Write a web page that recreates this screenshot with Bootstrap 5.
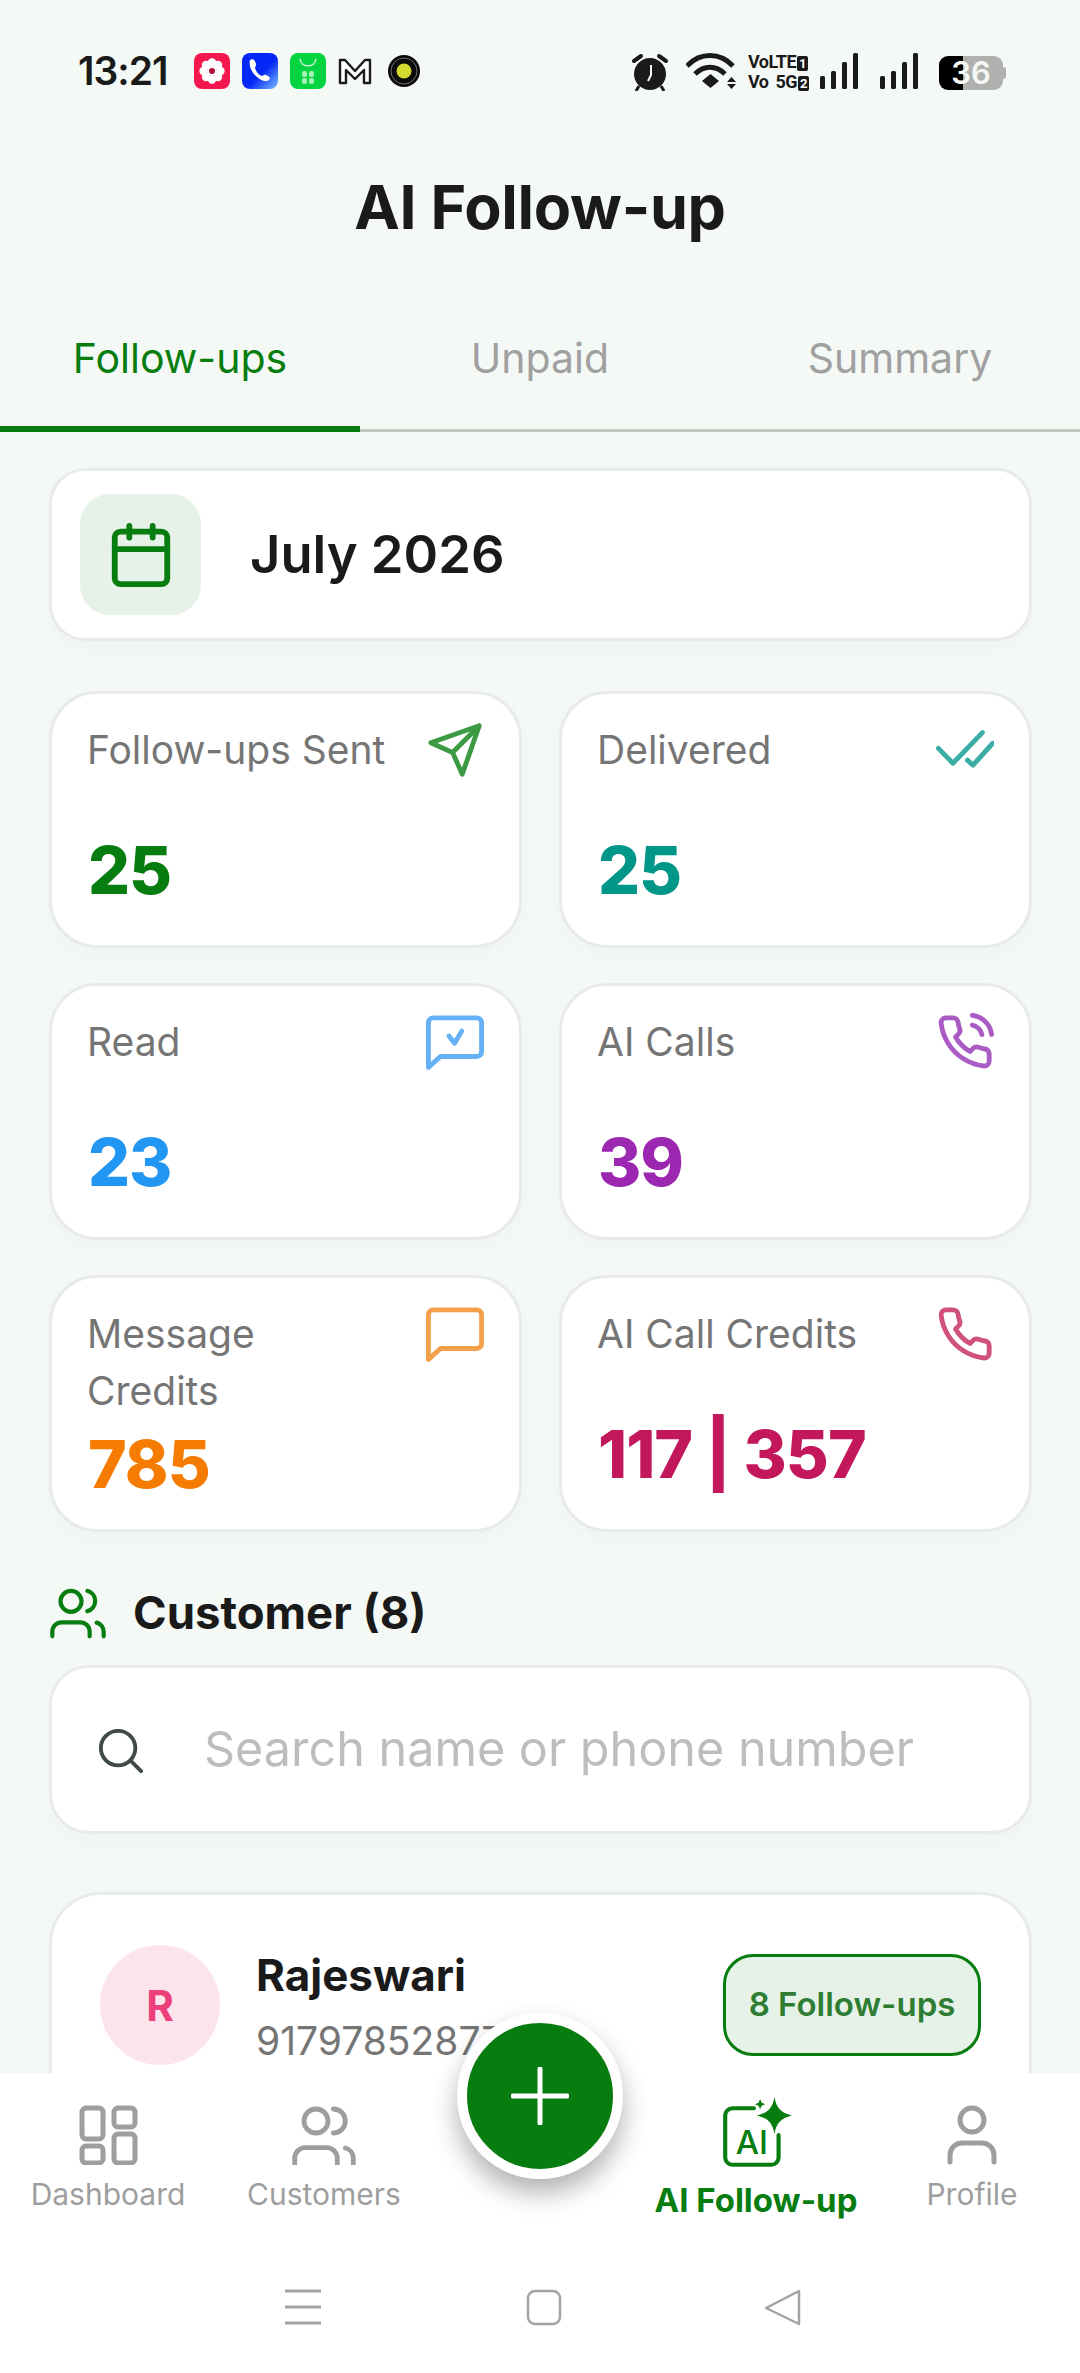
<!DOCTYPE html>
<html lang="en">
<head>
    <meta charset="UTF-8">
    <meta name="viewport" content="width=device-width, initial-scale=1.0">
    <title>AI Follow-up</title>
    <link href="https://cdn.jsdelivr.net/npm/bootstrap@5.3.3/dist/css/bootstrap.min.css" rel="stylesheet">
    <style>
        body { background: #f5f9f6; font-family: Inter, "Noto Sans", sans-serif; color: #1a1a1a; }
        .screen { width: 1080px; height: 2373px; overflow: hidden; position: relative; }
        .content-area { height: 2073px; overflow: hidden; }
        .status-bar { height: 94px; padding: 53px 77px 0 78px; }
        .clock { font-size: 39px; font-weight: 600; line-height: 36px; letter-spacing: -1px; margin-right: 26px; }
        .tiny-net { font-family: Roboto, sans-serif; font-size: 18px; font-weight: 700; line-height: 18px; width: 58px; letter-spacing: -.5px; word-spacing: 3px; white-space: nowrap; }
        .sim-no { background: #1a1a1a; color: #fff; font-size: 13px; padding: 0 2px; border-radius: 2px; margin-left: 1px; }
        .battery-box { width: 64px; height: 34px; border-radius: 9px; background: linear-gradient(90deg, #000 37%, #b0b1ae 37%); color: #f5f9f6; font-size: 31px; font-weight: 600; line-height: 34px; text-align: center; margin-top: 3px; position: relative; }
        .battery-box::after { content: ""; position: absolute; right: -3px; top: 11px; width: 3px; height: 12px; background: #b0b1ae; border-radius: 0 3px 3px 0; }
        .page-title { font-size: 61px; font-weight: 700; line-height: 68px; margin: 0; padding-top: 79px; text-align: center; letter-spacing: -.3px; box-sizing: content-box; }
        .tab-row { border-bottom: 3px solid #c2c9bf; height: 109px; margin-top: 82px; }
        .tab-item { width: 360px; font-size: 41px; line-height: 56px; padding-top: 7px; text-align: center; color: #a0a0a0; height: 109px; }
        .tab-item.on { color: #087d0f; border-bottom: 6px solid #087d0f; }
        .body-pad { padding: 36px 48px 0 49px; }
        .soft-card { background: #fff; border: 3px solid #e9ebea; box-shadow: 0 8px 20px rgba(0, 0, 0, .025); }
        .month-card { height: 173px; border-radius: 36px; padding: 0 28px; margin-bottom: 50px; }
        .month-icon { width: 121px; height: 121px; border-radius: 30px; background: #e6f2e8; }
        .month-text { font-size: 52.5px; font-weight: 600; margin-left: 49px; }
        .stat-grid { --bs-gutter-x: 37px; --bs-gutter-y: 35px; }
        .stat-card { height: 257px; border-radius: 48px; padding: 27px 35px 0 35px; }
        .stat-label { font-size: 39px; line-height: 57px; color: #757575; min-height: 104px; white-space: nowrap; }
        .stat-num { font-size: 66px; font-weight: 800; line-height: 81px; margin-top: 5px; margin-left: 1px; letter-spacing: -1px; }
        .customer-head { margin-top: 43px; height: 76px; margin-left: 1px; }
        .customer-head span { font-size: 45.5px; font-weight: 700; margin-left: 27px; }
        .search-card { height: 169px; border-radius: 40px; margin-top: 14px; padding-left: 45px; }
        .search-input { font-size: 48.5px; color: #333; padding: 0; margin-left: 61px; background: transparent; box-shadow: none !important; }
        .search-input::placeholder { color: #bdbdbd; }
        .person-card { margin-top: 58px; height: 400px; border-radius: 52px; padding: 50px 48px 0 48px; }
        .person-avatar { width: 120px; height: 120px; border-radius: 50%; background: #fce4ec; color: #ec407a; font-size: 42px; font-weight: 700; flex: none; }
        .person-name { font-size: 44px; font-weight: 700; line-height: 56px; margin-top: 2px; }
        .person-phone { font-size: 39px; line-height: 52px; color: #757575; margin-top: 12px; }
        .person-info { margin-left: 36px; }
        .followup-pill { width: 258px; height: 102px; border: 3px solid #087d0f; border-radius: 30px; background: #e6f2e8; color: #2e7d32; font-size: 33px; font-weight: 600; margin-top: 9px; flex: none; }
        .bottom-bar { height: 300px; background: #fff; position: relative; padding-top: 32px; }
        .tab-link { width: 216px; font-size: 30px; color: #9e9e9e; line-height: 36px; text-align: center; }
        .tab-link svg { display: block; margin: 0 auto 11px; }
        .tab-link.on { color: #087d0f; font-weight: 700; font-size: 33px; }
        .add-btn { position: absolute; left: 457px; top: -60px; width: 166px; height: 166px; border-radius: 50%; background: #087d0f; border: 10px solid #fff; box-shadow: 0 14px 26px rgba(0, 0, 0, .3); padding: 0; }
        .system-nav { position: absolute; left: 0; right: 0; top: 216px; }
    </style>
</head>
<body>
<div class="screen">
    <div class="content-area">
        <!-- status bar -->
        <div class="status-bar d-flex justify-content-between">
            <div class="d-flex align-items-start">
                <div class="clock">13:21</div>
                <div class="d-flex align-items-center gap-2">
                    <svg width="36" height="36" viewBox="0 0 36 36" class="me-1"><rect width="36" height="36" rx="8" fill="#f5184e"/><g fill="#fff"><circle cx="18" cy="9.5" r="4.2"/><circle cx="18" cy="26.5" r="4.2"/><circle cx="9.5" cy="18" r="4.2"/><circle cx="26.5" cy="18" r="4.2"/><circle cx="12" cy="12" r="4.2"/><circle cx="24" cy="12" r="4.2"/><circle cx="12" cy="24" r="4.2"/><circle cx="24" cy="24" r="4.2"/><circle cx="18" cy="18" r="5"/></g><circle cx="18" cy="18" r="3" fill="#b0103a"/></svg>
                    <svg width="36" height="36" viewBox="0 0 36 36" class="me-1"><defs><linearGradient id="bl" x1="0" y1="0" x2="1" y2="1"><stop offset=".55" stop-color="#0527f5"/><stop offset="1" stop-color="#7cc4ff"/></linearGradient></defs><rect width="36" height="36" rx="8" fill="url(#bl)"/><path d="M8 7c3-2 5 0 6 4 .5 2-1 3-1 4 1 4 4 7 7 8 1 0 2-2 4-1 3 1 5 3 3 5-6 5-22-8-19-20z" fill="#fff"/></svg>
                    <svg width="36" height="36" viewBox="0 0 36 36" class="me-1"><rect width="36" height="36" rx="8" fill="#03d43f"/><path d="M10 6c1 9 15 9 16 0" fill="none" stroke="#c9f7d5" stroke-width="1.6"/><g fill="#a5f0b8"><rect x="12" y="18" width="5" height="6" rx="2"/><rect x="19" y="18" width="5" height="6" rx="2"/><rect x="12" y="25" width="5" height="6" rx="2"/><rect x="19" y="25" width="5" height="6" rx="2"/></g></svg>
                    <svg width="34" height="28" viewBox="0 0 34 28"><path d="M2 26V3h5l10 11L27 3h5v23h-6V13l-9 9-9-9v13z" fill="#fff" stroke="#1a1a1a" stroke-width="2.4" stroke-linejoin="round"/></svg>
                    <svg width="32" height="32" viewBox="0 0 32 32" class="ms-2"><circle cx="16" cy="16" r="16" fill="#0a0a0a"/><circle cx="16" cy="16" r="13" fill="none" stroke="#888" stroke-width=".8"/><circle cx="16" cy="16" r="7.5" fill="#d3d92f"/></svg>
                </div>
            </div>
            <div class="d-flex align-items-start">
                <svg width="38" height="38" viewBox="0 0 38 38" style="margin-right:17px"><circle cx="19" cy="21" r="16" fill="#1a1a1a"/><path d="M3 8l7-5M35 8l-7-5" stroke="#1a1a1a" stroke-width="4" stroke-linecap="round"/><path d="M8 33l-3 5M30 33l3 5" stroke="#1a1a1a" stroke-width="3"/><path d="M20 12v10l-3 6" fill="none" stroke="#f5f9f6" stroke-width="2"/></svg>
                <svg width="50" height="37" viewBox="0 0 50 37" style="margin-right:12px"><g fill="none" stroke="#1a1a1a" stroke-width="5"><path d="M1 13c13-14 33-14 46 0"/><path d="M9 21c9-9 21-9 30 0"/></g><path d="M16 28l8.500-7 8.500 7-8.500 7z" fill="#1a1a1a"/><path d="M41 29l4.500-5 4.500 5zM41 31h9l-4.500 5z" fill="#1a1a1a"/></svg>
                <div class="tiny-net" style="margin-right:14px">VoLTE<span class="sim-no">1</span><br>Vo 5G<span class="sim-no">2</span></div>
                <svg width="39" height="36" viewBox="0 0 39 36" style="margin-right:21px"><g fill="#1a1a1a"><rect x="0" y="23" width="5" height="13" rx="1.5"/><rect x="11" y="18" width="5" height="18" rx="1.5"/><rect x="22" y="9" width="5" height="27" rx="1.5"/><rect x="33" y="0" width="5" height="36" rx="1.5"/></g></svg>
                <svg width="39" height="36" viewBox="0 0 39 36" style="margin-right:20px"><g fill="#1a1a1a"><rect x="0" y="23" width="5" height="13" rx="1.5"/><rect x="11" y="18" width="5" height="18" rx="1.5"/><rect x="22" y="9" width="5" height="27" rx="1.5"/><rect x="33" y="0" width="5" height="36" rx="1.5"/></g></svg>
                <div class="battery-box">36</div>
            </div>
        </div>

        <h1 class="page-title">AI Follow-up</h1>

        <!-- tabs -->
        <div class="tab-row d-flex">
            <div class="tab-item on">Follow-ups</div>
            <div class="tab-item">Unpaid</div>
            <div class="tab-item">Summary</div>
        </div>

        <div class="body-pad">
            <div class="card soft-card month-card d-flex flex-row align-items-center">
                <div class="month-icon d-flex align-items-center justify-content-center">
                    <svg width="70" height="70" viewBox="0 0 24 24" fill="none" stroke="#087d0f" stroke-width="2" stroke-linecap="round" stroke-linejoin="round"><rect x="3" y="4" width="18" height="18" rx="2"/><path d="M16 2v4M8 2v4M3 10h18"/></svg>
                </div>
                <div class="month-text">July 2026</div>
            </div>

            <!-- stats -->
            <div class="row stat-grid">
                <div class="col-6">
                    <div class="card soft-card stat-card">
                        <div class="d-flex justify-content-between">
                            <div class="stat-label">Follow-ups Sent</div>
                            <svg width="58" height="58" viewBox="0 0 24 24" fill="none" stroke="#3d9a44" stroke-width="2" stroke-linecap="round" stroke-linejoin="round"><path d="M22 2 11 13M22 2l-7 20-4-9-9-4z"/></svg>
                        </div>
                        <div class="stat-num" style="color:#087d0f">25</div>
                    </div>
                </div>
                <div class="col-6">
                    <div class="card soft-card stat-card">
                        <div class="d-flex justify-content-between">
                            <div class="stat-label">Delivered</div>
                            <svg width="58" height="58" viewBox="0 0 24 24" fill="none" stroke="#3aaea5" stroke-width="2" stroke-linecap="round" stroke-linejoin="round"><path d="M1 11.3l6 6.2L19.2 4.8M13 16.2l2.3 2.1 8.2-9.1"/></svg>
                        </div>
                        <div class="stat-num" style="color:#009688">25</div>
                    </div>
                </div>
                <div class="col-6">
                    <div class="card soft-card stat-card">
                        <div class="d-flex justify-content-between">
                            <div class="stat-label">Read</div>
                            <svg width="58" height="58" viewBox="0 0 24 24" fill="none" stroke="#64b1f5" stroke-width="2" stroke-linecap="round" stroke-linejoin="round"><path d="M23 16a2 2 0 0 1-2 2H6l-5 4.500V4a2 2 0 0 1 2-2h18a2 2 0 0 1 2 2z"/><path d="M9.500 9.500l2.300 3 3-5"/></svg>
                        </div>
                        <div class="stat-num" style="color:#2196f3">23</div>
                    </div>
                </div>
                <div class="col-6">
                    <div class="card soft-card stat-card">
                        <div class="d-flex justify-content-between">
                            <div class="stat-label">AI Calls</div>
                            <svg width="58" height="58" viewBox="0 0 24 24" fill="none" stroke="#ab5cc4" stroke-width="2" stroke-linecap="round" stroke-linejoin="round"><path d="M15.050 5A5 5 0 0 1 19 8.950M15.050 1A9 9 0 0 1 23 8.940m-1 7.980v3a2 2 0 0 1-2.180 2 19.790 19.790 0 0 1-8.630-3.070 19.500 19.500 0 0 1-6-6 19.790 19.790 0 0 1-3.070-8.670A2 2 0 0 1 4.110 2h3a2 2 0 0 1 2 1.720 12.840 12.840 0 0 0 .7 2.810 2 2 0 0 1-.45 2.110L8.090 9.910a16 16 0 0 0 6 6l1.270-1.270a2 2 0 0 1 2.110-.45 12.840 12.840 0 0 0 2.810.7A2 2 0 0 1 22 16.920z"/></svg>
                        </div>
                        <div class="stat-num" style="color:#9c27b0">39</div>
                    </div>
                </div>
                <div class="col-6">
                    <div class="card soft-card stat-card">
                        <div class="d-flex justify-content-between">
                            <div class="stat-label">Message<br>Credits</div>
                            <svg width="58" height="58" viewBox="0 0 24 24" fill="none" stroke="#f5a04a" stroke-width="2" stroke-linecap="round" stroke-linejoin="round"><path d="M23 16a2 2 0 0 1-2 2H6l-5 4.500V4a2 2 0 0 1 2-2h18a2 2 0 0 1 2 2z"/></svg>
                        </div>
                        <div class="stat-num" style="color:#f57c00">785</div>
                    </div>
                </div>
                <div class="col-6">
                    <div class="card soft-card stat-card">
                        <div class="d-flex justify-content-between">
                            <div class="stat-label">AI Call Credits</div>
                            <svg width="58" height="58" viewBox="0 0 24 24" fill="none" stroke="#d0517e" stroke-width="2" stroke-linecap="round" stroke-linejoin="round"><path d="M22 16.920v3a2 2 0 0 1-2.180 2 19.790 19.790 0 0 1-8.630-3.070 19.500 19.500 0 0 1-6-6 19.790 19.790 0 0 1-3.070-8.670A2 2 0 0 1 4.110 2h3a2 2 0 0 1 2 1.720 12.840 12.840 0 0 0 .7 2.810 2 2 0 0 1-.45 2.110L8.090 9.910a16 16 0 0 0 6 6l1.270-1.270a2 2 0 0 1 2.110-.45 12.840 12.840 0 0 0 2.810.7A2 2 0 0 1 22 16.920z"/></svg>
                        </div>
                        <div class="stat-num" style="color:#c2185b">117 | 357</div>
                    </div>
                </div>
            </div>

            <!-- customers -->
            <div class="customer-head d-flex align-items-center">
                <svg width="56" height="58" viewBox="0 0 24 24" fill="none" stroke="#087d0f" stroke-width="1.8" stroke-linecap="round" stroke-linejoin="round"><path d="M17 22v-2a4 4 0 0 0-4-4H5a4 4 0 0 0-4 4v2"/><circle cx="9" cy="7" r="4.500"/><path d="M23 22v-2a4 4 0 0 0-3-3.870M16 2.500a4.500 4.500 0 0 1 0 8.700"/></svg>
                <span>Customer (8)</span>
            </div>
            <div class="card soft-card search-card d-flex flex-row align-items-center">
                <svg width="46" height="46" viewBox="0 0 24 24" fill="none" stroke="#3f4a42" stroke-width="2" stroke-linecap="round" stroke-linejoin="round" class="flex-shrink-0"><circle cx="11" cy="11" r="9"/><path d="m23 23-5.500-5.500"/></svg>
                <input class="form-control border-0 search-input" type="text" placeholder="Search name or phone number">
            </div>

            <div class="card soft-card person-card">
                <div class="d-flex align-items-start">
                    <div class="person-avatar d-flex align-items-center justify-content-center">R</div>
                    <div class="person-info flex-grow-1">
                        <div class="person-name">Rajeswari</div>
                        <div class="person-phone">917978528777</div>
                    </div>
                    <div class="followup-pill d-flex align-items-center justify-content-center">8 Follow-ups</div>
                </div>
            </div>
        </div>
    </div>

    <!-- bottom nav -->
    <div class="bottom-bar">
        <div class="d-flex">
            <div class="tab-link">
                <svg width="60" height="60" viewBox="0 0 60 60" fill="none" stroke="#9e9e9e" stroke-width="5"><rect x="4" y="3" width="21" height="31" rx="4"/><rect x="36" y="3" width="21" height="19" rx="4"/><rect x="4" y="41" width="21" height="17" rx="4"/><rect x="36" y="29" width="21" height="29" rx="4"/></svg>
                Dashboard
            </div>
            <div class="tab-link">
                <svg width="64" height="60" viewBox="0 0 24 22.500" fill="none" stroke="#9e9e9e" stroke-width="1.800" stroke-linecap="round" stroke-linejoin="round"><path d="M17 22v-2a4 4 0 0 0-4-4H5a4 4 0 0 0-4 4v2"/><circle cx="9" cy="6" r="4.500"/><path d="M23 22v-2a4 4 0 0 0-3-3.870M15.500 1.500a4.500 4.500 0 0 1 0 9"/></svg>
                Customers
            </div>
            <div class="tab-link"></div>
            <div class="tab-link on" style="margin-top:-8px">
                <svg width="78" height="78" viewBox="0 0 76 76" style="margin-bottom:7px"><path d="M36 11H15a7 7 0 0 0-7 7v41a7 7 0 0 0 7 7h38a7 7 0 0 0 7-7V37" fill="none" stroke="#087d0f" stroke-width="4" stroke-linecap="round"/><text x="34" y="56" text-anchor="middle" font-family="Inter, sans-serif" font-size="32" font-weight="500" fill="#087d0f">AI</text><path d="M56 0c2 11 6 15 17 18-11 3-15 7-17 18-2-11-6-15-17-18 11-3 15-7 17-18z" fill="#087d0f"/><path d="M42 2l1.500 3.500L47 7l-3.500 1.500L42 12l-1.500-3.500L37 7l3.500-1.500z" fill="#087d0f"/></svg>
                AI Follow-up
            </div>
            <div class="tab-link">
                <svg width="60" height="60" viewBox="0 0 60 60" fill="none" stroke="#9e9e9e" stroke-width="5" stroke-linecap="round"><circle cx="30" cy="15" r="12"/><path d="M8 57V50a12 12 0 0 1 12-12h20a12 12 0 0 1 12 12v7"/></svg>
                Profile
            </div>
        </div>
        <button class="add-btn d-flex align-items-center justify-content-center" type="button" aria-label="Add">
            <svg width="58" height="58" viewBox="0 0 58 58" stroke="#fff" stroke-width="5" stroke-linecap="round"><path d="M29 2v54M2 29h54"/></svg>
        </button>
        <div class="system-nav">
            <svg width="38" height="36" viewBox="0 0 38 36" fill="none" stroke="#a3a3a3" stroke-width="3" style="position:absolute;left:284px;top:0"><path d="M1 2h36M1 18h36M1 34h36"/></svg>
            <svg width="36" height="37" viewBox="0 0 36 37" fill="none" stroke="#a3a3a3" stroke-width="2.500" style="position:absolute;left:526px;top:0"><rect x="2" y="2" width="32" height="33" rx="7"/></svg>
            <svg width="38" height="37" viewBox="0 0 38 37" fill="none" stroke="#a3a3a3" stroke-width="2.500" stroke-linejoin="round" style="position:absolute;left:764px;top:0"><path d="M35 2v33L2 19z"/></svg>
        </div>
    </div>
</div>
<script src="https://cdn.jsdelivr.net/npm/bootstrap@5.3.3/dist/js/bootstrap.bundle.min.js"></script>
</body>
</html>
